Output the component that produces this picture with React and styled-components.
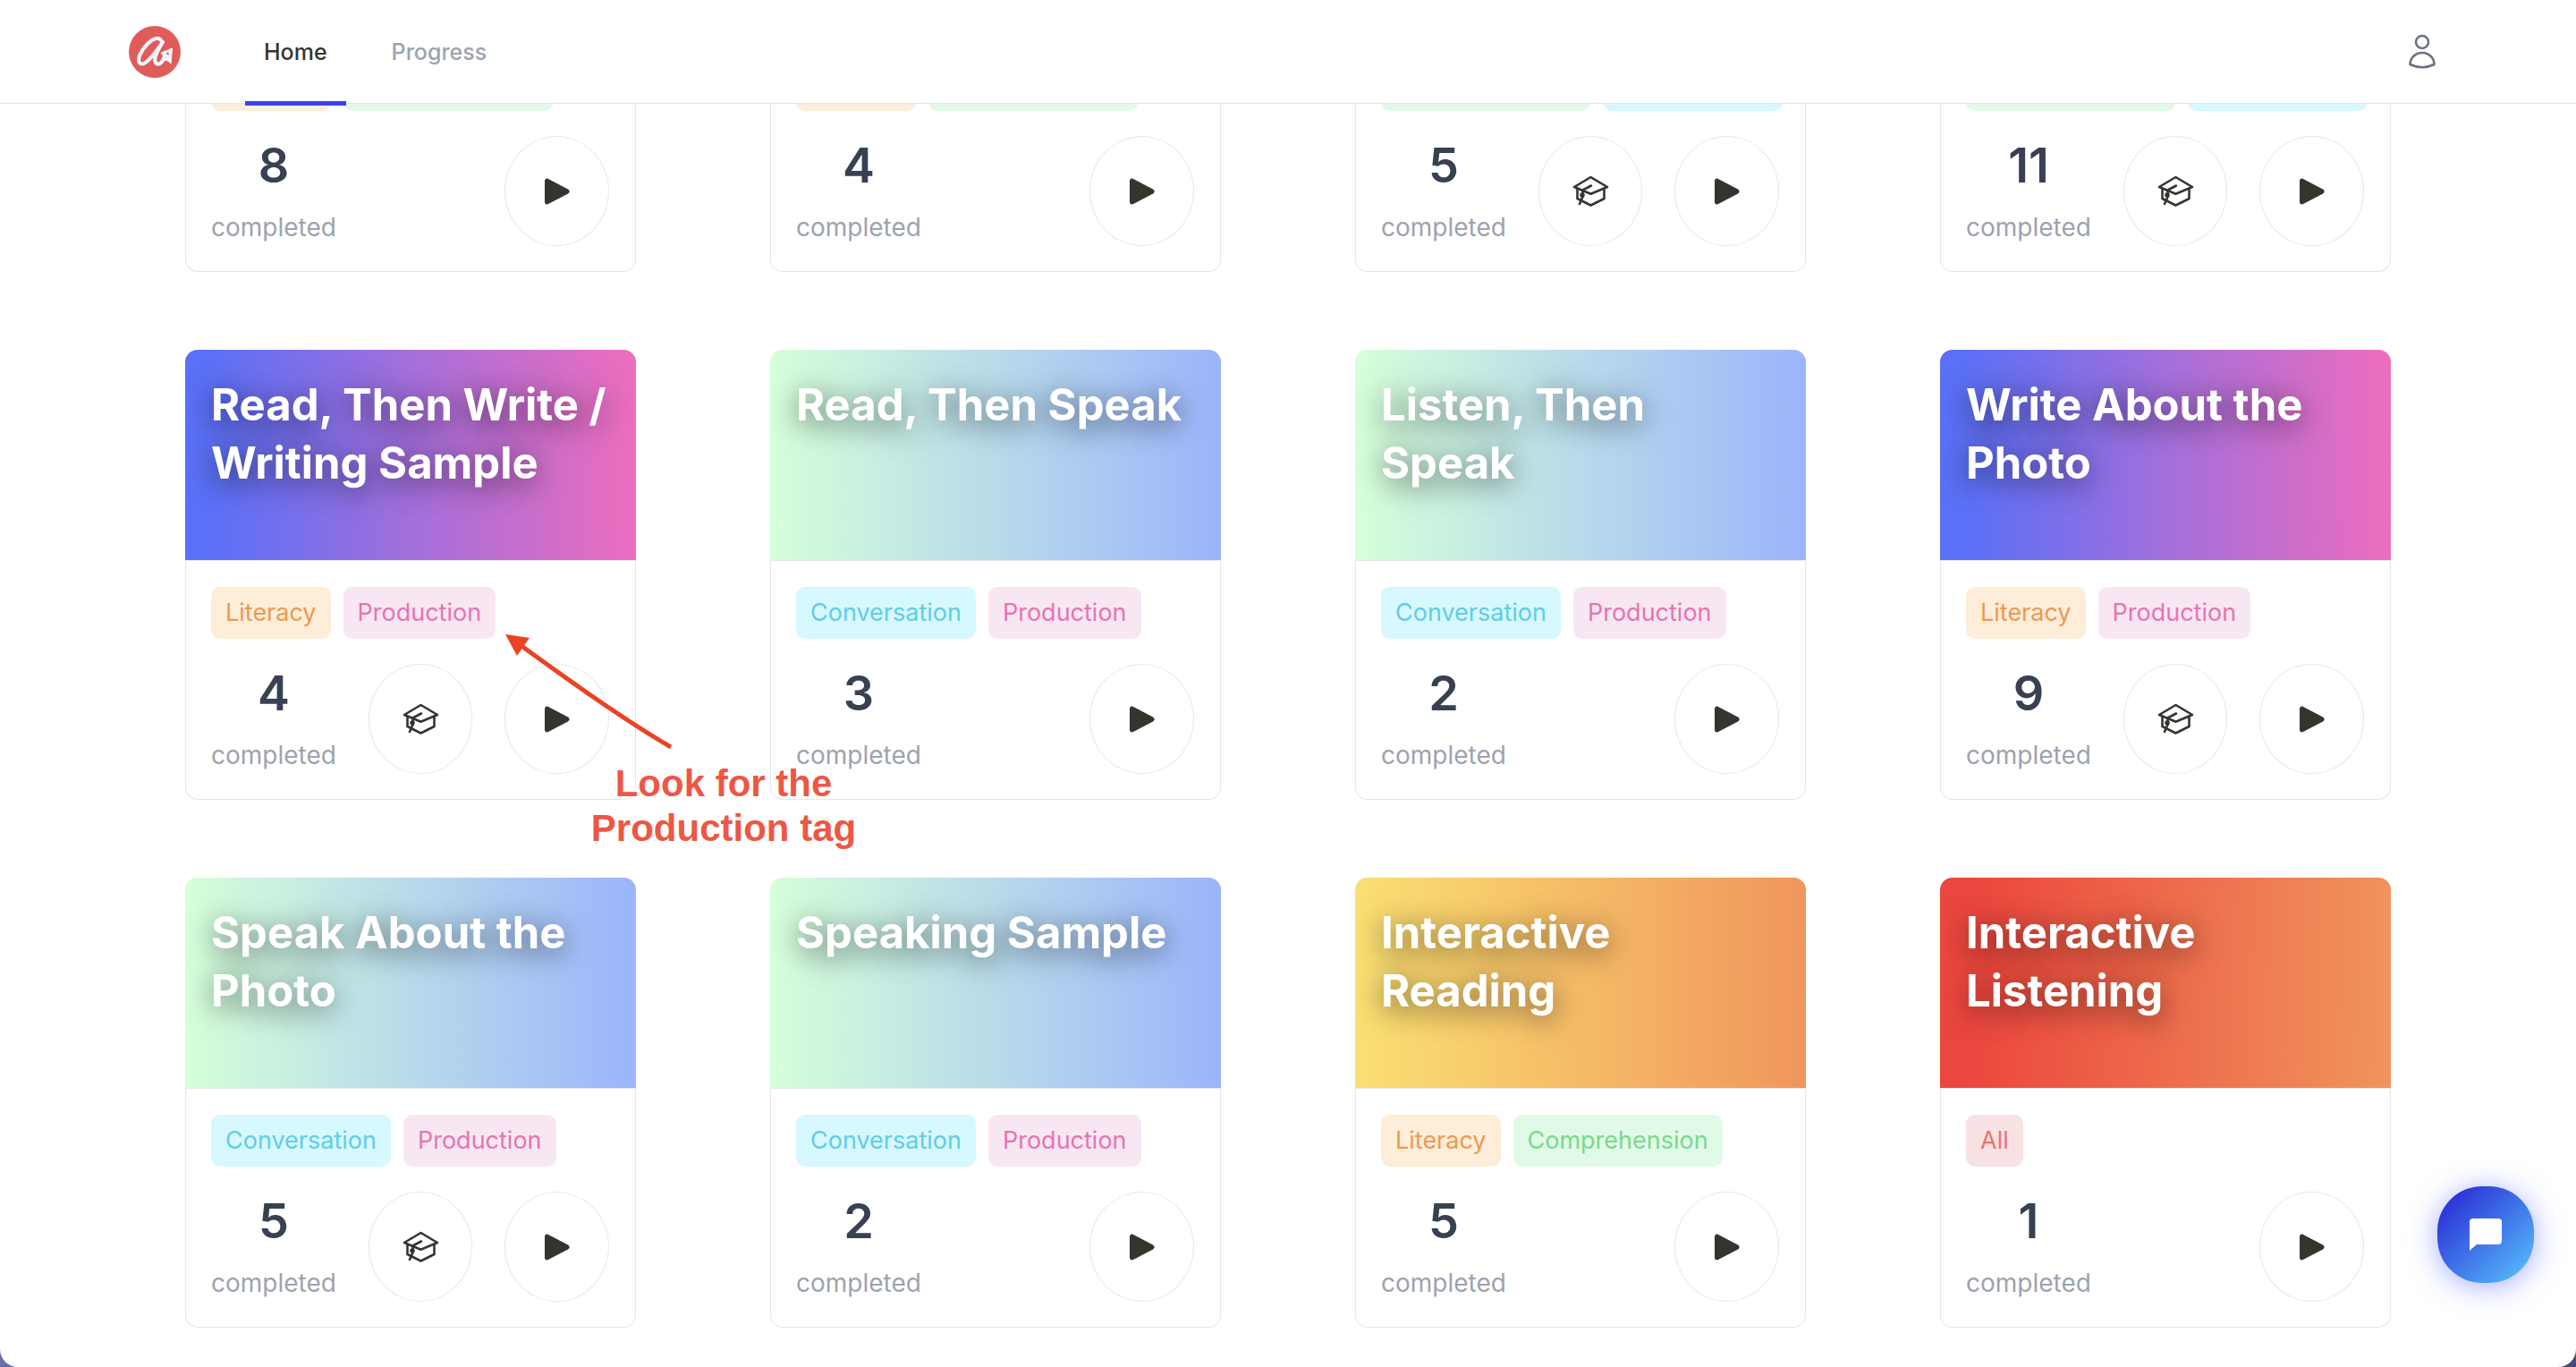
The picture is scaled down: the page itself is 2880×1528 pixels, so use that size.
import { createGlobalStyle, styled } from 'styled-components';

const GlobalStyle = createGlobalStyle`
    *, *::before, *::after {
        box-sizing: border-box;
    }
    html {
        height: 100%;
        overflow: hidden;
        background: linear-gradient(90deg, #6670a3, #454a78);
    }
    body, #root {
        height: 100%;
        margin: 0;
    }
    body {
        font-family: Inter, "Liberation Sans", sans-serif;
    }
`

const GRADIENTS = {
    blue: 'linear-gradient(88deg, #5a70f6 6%, #a36fdb 50%, #ee6dbd)',
    mint: 'linear-gradient(90deg, #d6ffd9, #9ab5fb)',
    gold: 'linear-gradient(90deg, #fae072, #f0955c)',
    red: 'linear-gradient(92deg, #eb473e 8%, #f0955c)',
}

const TAGS = {
    Literacy: { color: '#ef9850', background: '#fdedd9' },
    Comprehension: { color: '#78d98b', background: '#e1fae7' },
    Conversation: { color: '#5fcde8', background: '#d6f8fe' },
    Production: { color: '#e873b2', background: '#f8e7f2' },
    All: { color: '#e97272', background: '#f8e2e3' },
}

const cards = [
    { fill: 'gold', tags: ['Literacy', 'Comprehension'], count: 8 },
    { fill: 'gold', tags: ['Literacy', 'Comprehension'], count: 4 },
    { fill: 'mint', tags: ['Comprehension', 'Conversation'], count: 5, lesson: true },
    { fill: 'mint', tags: ['Comprehension', 'Conversation'], count: 11, lesson: true },
    { title: 'Read, Then Write / Writing Sample', fill: 'blue', tags: ['Literacy', 'Production'], count: 4, lesson: true },
    { title: 'Read, Then Speak', fill: 'mint', tags: ['Conversation', 'Production'], count: 3 },
    { title: 'Listen, Then Speak', fill: 'mint', tags: ['Conversation', 'Production'], count: 2 },
    { title: 'Write About the Photo', fill: 'blue', tags: ['Literacy', 'Production'], count: 9, lesson: true },
    { title: 'Speak About the Photo', fill: 'mint', tags: ['Conversation', 'Production'], count: 5, lesson: true },
    { title: 'Speaking Sample', fill: 'mint', tags: ['Conversation', 'Production'], count: 2 },
    { title: 'Interactive Reading', fill: 'gold', tags: ['Literacy', 'Comprehension'], count: 5 },
    { title: 'Interactive Listening', fill: 'red', tags: ['All'], count: 1 },
]

const Window = styled.div`
    display: flex;
    flex-direction: column;
    height: 100%;
    overflow: hidden;
    background: #fff;
    border-radius: 0 0 20px 20px;
`

const Header = styled.header`
    position: relative;
    z-index: 1;
    display: flex;
    align-items: center;
    flex-shrink: 0;
    height: 116px;
    padding: 0 144px;
    background: #fff;
    border-bottom: 1px solid #e5e7eb;
`

const LogoLink = styled.a`
    display: flex;
    margin-right: 72px;
`

const Nav = styled.nav`
    display: flex;
    gap: 30px;
    height: 100%;
`

const NavLink = styled.a`
    position: relative;
    display: flex;
    align-items: center;
    padding: 0 21px;
    color: ${(props) => (props.$active ? '#35342f' : '#9ca3af')};
    font-size: 25px;
    font-weight: 500;
    text-decoration: none;

    &::after {
        content: '';
        position: absolute;
        left: 0;
        right: 0;
        bottom: -3px;
        height: 5px;
        background: ${(props) => (props.$active ? '#3c41ea' : 'transparent')};
    }
`

const ProfileButton = styled.button`
    display: flex;
    margin-left: auto;
    padding: 6px 12px;
    background: none;
    border: none;
    color: #6b7280;
`

const Scroller = styled.main`
    display: flex;
    flex: 1;
    flex-direction: column;
    justify-content: flex-end;
    min-height: 0;
    padding: 0 207px 44px;
`

const CardGrid = styled.div`
    position: relative;
    display: grid;
    grid-template-columns: repeat(4, 1fr);
    gap: 87px 150px;
`

const Card = styled.article`
    overflow: hidden;
    background: #fff;
    border-radius: 14px;
    box-shadow: inset 0 0 0 1px #e5e7eb;
`

const CardHead = styled.div`
    height: 235px;
    padding: 29px 20px 0 29px;
    background: ${(props) => GRADIENTS[props.$fill]};
`

const CardTitle = styled.h2`
    margin: 0;
    color: #fff;
    font-size: 49px;
    font-weight: 700;
    line-height: 65px;
    text-shadow: 0 6px 32px rgba(0, 0, 0, 0.6);
`

const CardBody = styled.div`
    padding: 29px 30px 29px 29px;
    border-top: 1px solid #e5e7eb;
`

const TagList = styled.div`
    display: flex;
    gap: 14px;
`

const Tag = styled.span`
    padding: 0 16px;
    color: ${(props) => TAGS[props.$kind].color};
    background: ${(props) => TAGS[props.$kind].background};
    border-radius: 10px;
    font-size: 27px;
    line-height: 58px;
`

const CardFoot = styled.div`
    display: flex;
    align-items: center;
    gap: 36px;
    margin-top: 28px;
`

const Score = styled.div`
    display: flex;
    flex-direction: column;
    align-items: center;
    margin-right: auto;
`

const Count = styled.strong`
    color: #374151;
    font-size: 54px;
    font-weight: 600;
    line-height: 66px;
`

const Caption = styled.span`
    margin-top: 15px;
    color: #9ca3af;
    font-size: 28px;
    line-height: 42px;
`

const RoundButton = styled.button`
    display: flex;
    align-items: center;
    justify-content: center;
    width: 117px;
    height: 123px;
    padding: 0;
    background: none;
    border: 1px solid #e5e7eb;
    border-radius: 50%;
    color: #35342f;
`

const Note = styled.div`
    position: absolute;
    left: 358px;
    bottom: 533px;
    display: flex;
    flex-direction: column;
    gap: 10px;
    width: 488px;
    pointer-events: none;
`

const NoteText = styled.p`
    margin: 0;
    color: #ed5745;
    font-family: "Liberation Sans", sans-serif;
    font-size: 42px;
    font-weight: 700;
    line-height: 50px;
    text-align: center;
`

const ChatButton = styled.button`
    position: fixed;
    right: 47px;
    bottom: 94px;
    z-index: 2;
    display: flex;
    align-items: center;
    justify-content: center;
    width: 108px;
    height: 108px;
    padding: 0;
    background: linear-gradient(135deg, #2a2fd6 10%, #56bdfb 95%);
    border: none;
    border-radius: 50px;
    box-shadow: 0 4px 32px rgba(72, 96, 255, 0.5);
    color: #fff;
`

function Logo() {
    return (
        <svg width="58" height="58" viewBox="0 0 58 58" aria-hidden="true">
            <circle cx="29" cy="29" r="29" fill="#df5d59" />
            <g fill="none" stroke="#f1f4fd" strokeWidth="4.2" strokeLinecap="round" strokeLinejoin="round">
                <path d="M36 16C33 12 27 14 21 20C14 27 9 37 12 41C15 45 21 40 26 34C31 28 35 22 38 18C33 26 27 36 30 41C33 45 38 41 40 34" />
            </g>
            <path d="M48.500 25L36 30L39 34L38 38L44 39L47 42Z" fill="#f1f4fd" stroke="#f1f4fd" strokeLinejoin="round" />
            <circle cx="43.500" cy="31" r="1.300" fill="#df5d59" />
        </svg>
    )
}

function CapIcon() {
    return (
        <svg width="41" height="36" viewBox="0 0 41 36" fill="none" stroke="currentColor" strokeWidth="2.6" strokeLinejoin="round" strokeLinecap="round" aria-hidden="true">
            <path d="M20.500 2L39 13L20.500 20.700L2 13Z" />
            <path d="M5.500 15.500V26L20.500 33.500L35.500 26V15.500" />
            <path d="M21 11.500L11.500 16.500V24L8 32" />
            <circle cx="11" cy="22" r="1.500" fill="currentColor" />
        </svg>
    )
}

function PlayIcon() {
    return (
        <svg width="30" height="30" viewBox="0 0 30 30" fill="currentColor" aria-hidden="true">
            <path d="M1 3.500C1 .8 3 0 5 1L27 12.500Q30.500 15 27 17.500L5 29C3 30 1 29.200 1 26.500Z" />
        </svg>
    )
}

function ExerciseCard({ title, fill, tags, count, lesson }) {
    return (
        <Card>
            <CardHead $fill={fill}>
                {title && <CardTitle>{title}</CardTitle>}
            </CardHead>
            <CardBody>
                <TagList>
                    {tags.map((tag) => <Tag key={tag} $kind={tag}>{tag}</Tag>)}
                </TagList>
                <CardFoot>
                    <Score>
                        <Count>{count}</Count>
                        <Caption>completed</Caption>
                    </Score>
                    {lesson && <RoundButton aria-label="Open lesson"><CapIcon /></RoundButton>}
                    <RoundButton aria-label="Start practice"><PlayIcon /></RoundButton>
                </CardFoot>
            </CardBody>
        </Card>
    )
}

export default function App() {
    return (
        <>
            <GlobalStyle />
            <Window>
                <Header>
                    <LogoLink href="#" aria-label="Home page"><Logo /></LogoLink>
                    <Nav>
                        <NavLink href="#home" $active>Home</NavLink>
                        <NavLink href="#progress">Progress</NavLink>
                    </Nav>
                    <ProfileButton aria-label="Profile">
                        <svg width="32" height="40" viewBox="0 0 32 40" fill="none" stroke="currentColor" strokeWidth="2.600" strokeLinejoin="round">
                            <circle cx="16" cy="9" r="7" />
                            <path d="M2.500 34A13.500 13 0 0 1 29.500 34Q16 40.500 2.500 34Z" />
                        </svg>
                    </ProfileButton>
                </Header>
                <Scroller>
                    <CardGrid>
                        {cards.map((card, index) => <ExerciseCard key={index} {...card} />)}
                        <Note>
                            <svg width="190" height="132" viewBox="0 0 190 132" aria-hidden="true">
                                <path d="M18 13C65 47 130 94 185 126" fill="none" stroke="#ea4225" strokeWidth="5" />
                                <path d="M0 0L27 4L13 24Z" fill="#ea4225" />
                            </svg>
                            <NoteText>Look for the<br />Production tag</NoteText>
                        </Note>
                    </CardGrid>
                </Scroller>
            </Window>
            <ChatButton aria-label="Open chat">
                <svg width="38" height="38" viewBox="0 0 38 38" fill="currentColor" aria-hidden="true">
                    <path d="M5 1H33Q37 1 37 5V26Q37 30 33 30H9L1 37V5Q1 1 5 1Z" />
                </svg>
            </ChatButton>
        </>
    )
}
